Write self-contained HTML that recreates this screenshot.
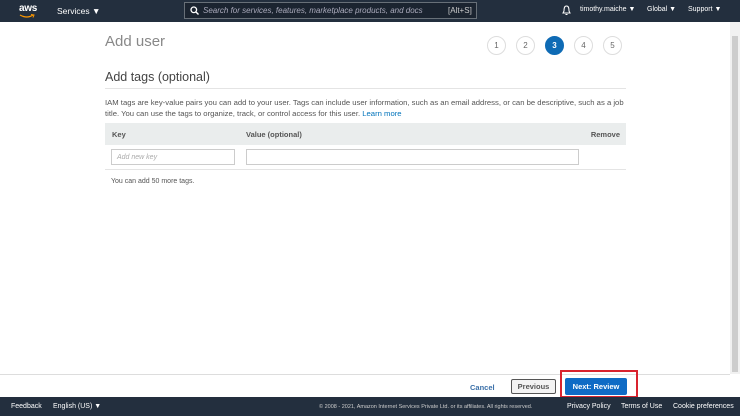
<!DOCTYPE html>
<html><head><meta charset="utf-8"><style>
*{box-sizing:border-box;margin:0;padding:0}
body{width:740px;height:416px;overflow:hidden;background:#fff;font-family:"Liberation Sans",Arial,sans-serif;position:relative;color:#444}
.hdr{position:absolute;left:0;top:0;width:740px;height:22px;background:#232f3e;color:#fff;font-size:8.5px}
.hdr span{position:absolute;top:6px}
.ab{position:absolute}
.sb{position:absolute;left:730px;top:22px;width:10px;height:352px;background:#f1f1f1}
.sb div{position:absolute;left:2px;top:14px;width:6px;height:336px;background:#cdcdcd}
.step{position:absolute;top:36px;width:19px;height:19px;border-radius:50%;border:1px solid #ddd;font-size:8px;text-align:center;line-height:17px;color:#666}
.step.on{background:#0f6bb5;border-color:#0f6bb5;color:#fff;font-weight:bold}
.foot{position:absolute;left:0;top:397px;width:740px;height:19px;background:#232f3e;color:#fff;font-size:7px}
.foot span{position:absolute;top:6px}
</style></head><body>
<div class="hdr">
<span style="left:19px;top:3px;font-weight:bold;font-size:10px;letter-spacing:-0.3px">aws</span>
<svg class="ab" style="left:19px;top:14px" width="16" height="5"><path d="M1 1 Q8 5 14 1" stroke="#f90" stroke-width="1.2" fill="none"/><path d="M12 0.5 L15 1 L14 3.5" stroke="#f90" stroke-width="1" fill="none"/></svg>
<span style="left:57px;top:6px">Services ▼</span>
<div style="position:absolute;left:184px;top:2px;width:293px;height:17px;border:1px solid #687078;background:#1b2430"></div>
<svg class="ab" style="left:190px;top:6px" width="9" height="9"><circle cx="3.8" cy="3.8" r="2.8" stroke="#fff" stroke-width="1.3" fill="none"/><path d="M6 6 L8.5 8.5" stroke="#fff" stroke-width="1.4"/></svg>
<span style="left:203px;color:#aab;font-style:italic;font-size:8px">Search for services, features, marketplace products, and docs</span>
<span style="left:448px;color:#ccc;font-size:8px">[Alt+S]</span>
<svg class="ab" style="left:562px;top:5px" width="9" height="11"><path d="M4.5 1 C2 1 2 4 2 6 L1 8 L8 8 L7 6 C7 4 7 1 4.5 1 Z M3.5 9.5 L5.5 9.5" stroke="#fff" stroke-width="1" fill="none"/></svg>
<span style="left:580px;font-size:7px">timothy.maiche ▼</span>
<span style="left:647px;font-size:7px">Global ▼</span>
<span style="left:688px;font-size:7px">Support ▼</span>
</div>
<div class="sb"><div></div></div>
<div class="ab" style="left:105px;top:33px;font-size:15px;color:#888">Add user</div>
<div class="step" style="left:487px">1</div>
<div class="step" style="left:516px">2</div>
<div class="step on" style="left:545px">3</div>
<div class="step" style="left:574px">4</div>
<div class="step" style="left:603px">5</div>
<div class="ab" style="left:105px;top:70px;font-size:12.5px;color:#444">Add tags (optional)</div>
<div class="ab" style="left:105px;top:88px;width:521px;height:1px;background:#e4e4e4"></div>
<div class="ab" style="left:105px;top:97px;width:521px;font-size:7.7px;line-height:11px;color:#555">IAM tags are key-value pairs you can add to your user. Tags can include user information, such as an email address, or can be descriptive, such as a job title. You can use the tags to organize, track, or control access for this user. <span style="color:#0073bb">Learn more</span></div>
<div class="ab" style="left:105px;top:123px;width:521px;height:22px;background:#eaeded;font-size:7.5px;font-weight:bold;color:#555">
<span class="ab" style="left:7px;top:7px">Key</span><span class="ab" style="left:141px;top:7px">Value (optional)</span><span class="ab" style="right:6px;top:7px">Remove</span></div>
<div class="ab" style="left:111px;top:149px;width:124px;height:16px;border:1px solid #ccc;font-size:7px;font-style:italic;color:#aaa;padding:4px 5px">Add new key</div>
<div class="ab" style="left:246px;top:149px;width:333px;height:16px;border:1px solid #ccc"></div>
<div class="ab" style="left:105px;top:169px;width:521px;height:1px;background:#e4e4e4"></div>
<div class="ab" style="left:111px;top:178px;font-size:7px;color:#555">You can add 50 more tags.</div>
<div class="ab" style="left:0;top:374px;width:730px;height:1px;background:#ddd"></div>
<div class="ab" style="left:470px;top:383px;font-size:7.5px;font-weight:bold;color:#3a6fa8">Cancel</div>
<div class="ab" style="left:511px;top:379px;width:45px;height:15px;border:1px solid #555;border-radius:2px;background:#f3f3f3;font-size:7.5px;font-weight:bold;color:#555;text-align:center;line-height:13px">Previous</div>
<div class="ab" style="left:560px;top:370px;width:78px;height:28px;border:2px solid #d9232e"></div>
<div class="ab" style="left:565px;top:378px;width:62px;height:17px;background:#0f6bc5;border-radius:2px;font-size:7.5px;font-weight:bold;color:#fff;text-align:center;line-height:17px">Next: Review</div>
<div class="foot">
<span style="left:11px">Feedback</span><span style="left:53px">English (US) ▼</span>
<span style="left:319px;font-size:5.5px;top:7px;color:#ccc">© 2008 - 2021, Amazon Internet Services Private Ltd. or its affiliates. All rights reserved.</span>
<span style="left:567px">Privacy Policy</span><span style="left:621px">Terms of Use</span><span style="left:673px">Cookie preferences</span>
</div>
</body></html>
